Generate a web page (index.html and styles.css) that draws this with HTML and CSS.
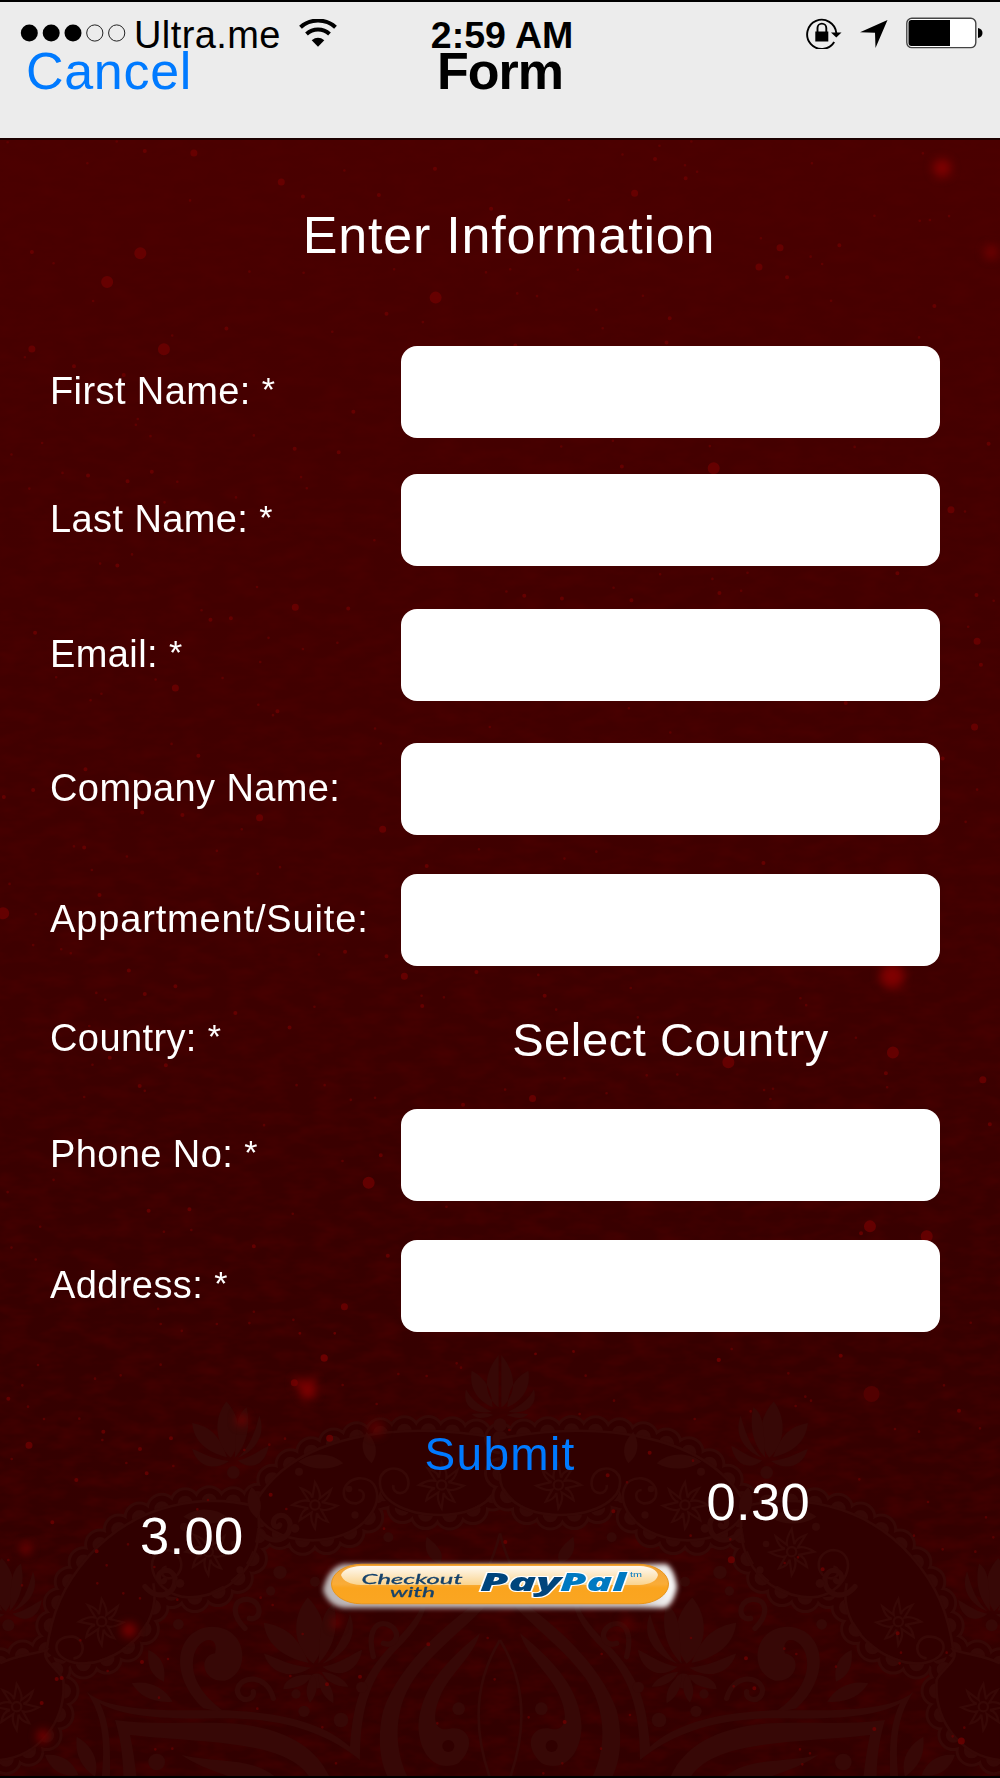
FILE: index.html
```html
<!DOCTYPE html>
<html>
<head>
    <meta charset="utf-8">
    <title>Form</title>
    <link rel="stylesheet" href="styles.css">
</head>
<body>
    <div class="screen">
        <!-- Background: speckles and mandala -->
        <svg class="backdrop" viewBox="0 0 1000 1778" aria-hidden="true">
            <defs>
                <filter id="soft" x="-50%" y="-50%" width="200%" height="200%"><feGaussianBlur stdDeviation="5"/></filter>
                <filter id="grain" x="0" y="0" width="100%" height="100%">
                    <feTurbulence type="fractalNoise" baseFrequency=".035 .08" numOctaves="3" seed="4"/>
                    <feColorMatrix values="0 0 0 0 .08  0 0 0 0 0  0 0 0 0 0  1 0 0 0 -.38"/>
                </filter>
                <g id="lotus">
                    <path d="M-8 -12 C-62 -60 -62 -140 -22 -190 C25 -140 32 -70 -8 -12Z"/>
                    <path d="M4 -12 C48 -60 54 -120 42 -172 C0 -145 12 -70 4 -12Z"/>
                    <path d="M-20 -14 C-45 -85 -75 -112 -130 -122 C-125 -65 -85 -30 -20 -14Z"/>
                    <path d="M14 -12 C70 -35 105 -85 82 -146 C65 -80 45 -40 14 -12Z"/>
                    <path d="M-14 -2 C-70 -8 -100 -30 -130 -40 C-115 15 -60 32 -14 -2Z"/>
                    <path d="M14 -4 C60 -14 85 -38 112 -50 C102 12 52 30 14 -4Z"/>
                    <circle cy="34" r="20"/>
                </g>
                <g id="star" class="ring">
                    <path d="M0 -68 Q18 -38 14 -20 L48 -46 Q38 -12 20 -9 L66 2 Q34 20 18 14 L38 50 Q12 44 6 24 L0 70 Q-16 44 -10 22 L-46 46 Q-40 14 -20 10 L-68 0 Q-38 -18 -18 -12 L-42 -50 Q-12 -40 -8 -22Z"/>
                    <circle r="14"/>
                </g>
                <g id="filler">
                    <path d="M-135 30 C-100 75 -40 55 -45 5 C-52 -28 -95 -25 -95 5 C-92 18 -80 18 -76 10" class="curl" transform="translate(-30 50)"/>
                    <path d="M45 -85 C5 -120 -50 -118 -90 -90 C-50 -65 5 -62 45 -85Z" transform="translate(40 -40)"/>
                    <path d="M0 0 C-35 -30 -32 -65 -15 -95 C15 -65 22 -30 0 0Z" transform="translate(170 -125)"/>
                    <circle cx="-48" cy="-100" r="12"/><circle cx="102" cy="-48" r="10"/><circle cx="-60" cy="70" r="13"/><circle cx="120" cy="30" r="11"/>
                </g>
                <path id="lobe1" d="M1500 430 C1505 500 1430 555 1320 555 C1210 555 1125 505 1142 440 C1160 400 1230 410 1225 465 C1222 500 1175 495 1180 465"/>
                <path id="lobe2" d="M1500 325 C1200 270 870 310 760 530 C800 660 1040 660 1110 555 C1150 500 1130 440 1075 445 C1015 455 1020 525 1070 520 C1100 510 1095 480 1075 480"/>
                <path id="lobe3" d="M770 530 C620 490 410 515 265 680 C190 765 155 850 140 960"/>
                <path id="lobe3b" d="M775 545 C800 740 640 815 545 800 C450 780 425 665 500 660 C560 665 555 745 505 745 C480 740 480 715 500 710"/>
                <path id="lobe4" d="M460 760 C490 900 340 1010 235 1000 C150 990 150 915 220 920 C260 930 255 985 220 985"/>
                <path id="lobe5" d="M0 1000 C50 975 90 975 140 960 C120 990 180 1020 190 1050 C200 1180 110 1280 0 1290"/>
                <g id="half">
                    <!-- scalloped edges -->
                    <g class="scallop-outer"><use href="#lobe2"/><use href="#lobe3"/><use href="#lobe3b"/><use href="#lobe4"/><use href="#lobe5"/><use href="#lobe1"/></g>
                    <g class="scallop-gap"><use href="#lobe2"/><use href="#lobe3"/><use href="#lobe3b"/><use href="#lobe4"/><use href="#lobe5"/><use href="#lobe1"/></g>
                    <g class="scallop-inner"><use href="#lobe2"/><use href="#lobe3"/><use href="#lobe3b"/><use href="#lobe4"/><use href="#lobe5"/><use href="#lobe1"/></g>
                    <g class="lobe-fill">
                        <path d="M1500 325 C1200 270 870 310 760 530 C800 660 1040 660 1110 555 L1142 480 C1150 580 1480 600 1500 430Z"/>
                        <path d="M770 530 C620 490 410 515 265 680 C190 765 155 850 140 960 C160 1010 400 1050 475 790 C560 830 800 780 770 530Z"/>
                        <path d="M0 1000 L140 960 C120 990 180 1020 190 1050 C200 1180 110 1280 0 1290Z"/>
                    </g>
                    <g class="lobe-line"><use href="#lobe2"/><use href="#lobe3"/><use href="#lobe3b"/><use href="#lobe4"/><use href="#lobe5"/><use href="#lobe1"/></g>
                    <g class="petal">
                        <use href="#star" x="1325" y="465"/><use href="#star" x="945" y="525"/><use href="#star" x="625" y="665"/>
                        <use href="#star" x="305" y="875"/><use href="#star" x="50" y="1130"/>
                        <use href="#filler" x="945" y="525"/><use href="#filler" x="600" y="690"/>
                        <use href="#lotus" transform="translate(700 395) scale(.95)"/>
                        <use href="#lotus" transform="translate(25 855) scale(.9)"/>
                        <use href="#lotus" transform="translate(950 1015) scale(1.22 1.12)"/>
                        <path d="M935 1035 C880 1030 850 1055 850 1078 C900 1075 925 1060 935 1035Z M940 1035 C910 1070 920 1100 930 1118 C955 1090 955 1060 940 1035Z M955 1030 C1000 1065 1002 1095 1000 1120 C965 1100 955 1070 955 1030Z M965 1025 C1010 1030 1035 1050 1045 1070 C1010 1072 980 1055 965 1025Z"/>
                        <path d="M445 960 C440 1010 455 1040 492 1055 C500 1005 480 975 445 960Z M395 1060 C450 1050 495 1075 518 1115 C460 1120 420 1100 395 1060Z"/>
                        <path d="M230 1220 C225 1270 240 1310 285 1340 C300 1290 275 1245 230 1220Z M135 1275 C185 1270 220 1295 235 1335 C190 1345 150 1320 135 1275Z"/>
                        <path d="M1280 620 C1320 650 1335 675 1320 700 C1285 690 1270 660 1280 620Z"/>
                        <!-- big curl under the lobes -->
                        <path d="M610 1135 C500 1030 530 895 635 890 C745 890 755 1030 675 1052 C610 1060 590 980 645 970 C660 910 590 920 580 985 C570 1050 620 1110 680 1150Z"/>
                        <path d="M260 1085 C310 1130 420 1145 650 1140 C850 1145 970 1180 1050 1250 C1060 1120 1080 1050 1160 960 C1230 890 1260 850 1265 820 L1280 820 C1270 870 1240 910 1180 970 C1100 1060 1080 1160 1080 1290 C980 1210 850 1160 640 1165 C450 1170 350 1150 300 1120 C335 1190 330 1270 330 1344 L305 1344 C315 1240 310 1160 260 1085Z"/>
                        <path d="M345 1170 C450 1185 560 1175 690 1180 C850 1190 950 1250 990 1344 L930 1344 C860 1230 620 1240 390 1215 C400 1260 405 1300 410 1344 L370 1344 C370 1280 360 1220 345 1170Z"/>
                        <path d="M545 1275 C650 1300 760 1280 830 1344 L700 1344 C630 1320 580 1300 545 1275Z"/>
                        <path d="M1440 810 C1340 880 1200 1000 1150 1140 C1130 1220 1140 1300 1165 1344 L1225 1344 C1180 1260 1180 1140 1240 1050 C1310 950 1420 880 1490 790Z"/>
                        <path d="M1440 910 C1330 1000 1260 1080 1255 1190 C1260 1290 1320 1325 1375 1300 C1430 1250 1410 1190 1355 1195 C1300 1210 1295 1160 1320 1100 C1350 1030 1420 980 1440 910Z"/>
                        <circle cx="840" cy="727" r="20"/><circle cx="535" cy="883" r="16"/><circle cx="812" cy="783" r="14"/><circle cx="912" cy="1144" r="17"/><circle cx="1023" cy="1170" r="22"/><circle cx="470" cy="1296" r="25"/><circle cx="1376" cy="1136" r="19"/><circle cx="1085" cy="1072" r="17"/><circle cx="888" cy="1092" r="14"/><circle cx="1165" cy="622" r="15"/><circle cx="945" cy="755" r="15"/>
                    </g>
                    <circle class="hole" cx="1345" cy="1248" r="18"/>
                    <path class="curl" d="M735 895 C690 850 700 805 745 808 C790 815 785 875 748 865 M820 1105 C800 1030 720 1035 712 1080 C715 1120 765 1115 760 1085 M1120 980 C1100 900 1130 875 1160 882 C1210 900 1190 955 1150 940"/>
                    <path class="outline" d="M1500 610 C1480 690 1450 760 1380 820 M1500 930 C1420 1060 1420 1200 1470 1344"/>
                    <path class="petal" d="M1490 228 C1450 190 1450 130 1496 75 V232Z M1478 232 C1475 170 1450 140 1415 122 C1405 180 1440 215 1478 232Z M1475 245 C1430 225 1410 200 1398 178 C1385 230 1425 255 1475 245Z M1480 255 C1455 265 1430 270 1415 252 C1440 250 1460 248 1480 255Z"/>
                </g>
            </defs>

            <rect y="138" width="1000" height="1640" filter="url(#grain)"/>

            <g transform="translate(0 1330) scale(.33333)">
                <use href="#half"/>
                <use href="#half" transform="translate(3000) scale(-1 1)"/>
                <circle class="petal" cx="1500" cy="285" r="20"/>
            </g>

            <g class="specks" transform="translate(0 130) scale(.6378 .3827)">
                <path class="s12" d="M168 397h0M220 322h0M683 438h0M257 573h0M1119 884h0"/>
                <path class="s8" d="M304 60h0M441 136h0M50 572h0M1223 308h0M1190 358h0M463 1247h0M275 1458h0M1491 992h0M1528 1560h0M995 165h0M1532 1336h0"/>
                <path class="s5" d="M227 55h0M475 174h0M594 170h0M770 206h0M1027 76h0M1075 126h0M50 319h0M116 617h0M194 640h0M606 480h0M1050 492h0M1465 460h0M1316 301h0M1234 385h0M200 918h0M238 893h0M138 903h0M462 833h0M531 842h0M554 736h0M975 879h0M822 1217h0M881 1224h0M990 1229h0M1128 1210h0M1407 1158h0M1531 1215h0M330 1280h0M362 1276h0M546 1250h0M55 1314h0M435 1519h0M1550 820h0M1326 1497h0M184 1138h0M355 519h0M1045 555h0M1538 1397h0M808 563h0M682 101h0"/>
                <path class="s3" d="M12 32h0M183 30h0M540 106h0M976 64h0M1034 41h0M1084 30h0M1074 92h0M1093 109h0M1273 87h0M1447 61h0M892 183h0M298 184h0M137 87h0M1371 224h0M1442 237h0M1458 235h0M1488 225h0M1193 283h0M1271 331h0M1289 350h0M906 365h0M800 364h0M762 372h0M618 364h0M476 373h0M391 370h0M84 348h0M146 447h0M811 427h0M842 434h0M1008 433h0M935 470h0M945 518h0M663 502h0M521 527h0M270 537h0M39 594h0M216 755h0M213 770h0M236 800h0M398 798h0M66 818h0M18 848h0M98 896h0M278 919h0M46 937h0M370 960h0M472 907h0M481 936h0M258 973h0M880 827h0M961 812h0M1113 826h0M1340 828h0M1513 997h0M587 1072h0M207 1109h0M157 1133h0M403 1194h0M316 1255h0M421 1327h0M475 1356h0M529 1340h0M408 1390h0M349 1432h0M244 1436h0M88 1430h0M159 1473h0M142 1490h0M405 1502h0M428 1529h0M588 1564h0M768 1560h0M986 1511h0M1035 1161h0M1172 1157h0M1117 1173h0M962 1196h0M1162 1204h0M794 1206h0M1518 1298h0M1558 1230h0M1303 446h0M1441 542h0"/>
            </g>
            <g class="specks" transform="translate(0 730) scale(.6378 .4082)">
                <path class="s12" d="M1142 814h0M5 449h0M1400 790h0M1364 1216h0M1453 1240h0M578 1109h0"/>
                <path class="s8" d="M407 215h0M600 243h0M634 603h0M540 1413h0M508 1538h0M1541 857h0M835 903h0"/>
                <path class="s5" d="M6 164h0M52 147h0M223 202h0M286 208h0M132 288h0M156 404h0M275 628h0M369 693h0M227 647h0M202 589h0M311 63h0M134 96h0M669 333h0M1197 326h0M747 593h0M854 651h0M1389 841h0M726 918h0M454 729h0M219 872h0M597 1042h0M233 1178h0M297 1174h0M398 1265h0M608 1288h0M1350 1233h0M606 554h0M260 821h0M172 803h0M1478 70h0M1552 966h0M1127 1543h0M662 676h0M541 543h0"/>
                <path class="s3" d="M269 34h0M597 33h0M1051 6h0M1532 146h0M1514 225h0M379 243h0M116 285h0M199 310h0M144 343h0M340 296h0M404 352h0M439 336h0M751 292h0M885 315h0M935 298h0M15 377h0M56 451h0M52 527h0M96 537h0M111 547h0M500 550h0M545 497h0M844 600h0M989 632h0M872 685h0M696 655h0M661 651h0M493 678h0M151 644h0M165 661h0M1000 704h0M1255 657h0M1264 674h0M1342 754h0M885 853h0M1014 846h0M1062 844h0M1212 879h0M1198 882h0M1208 904h0M1391 875h0M951 890h0M792 881h0M465 870h0M509 870h0M550 906h0M588 901h0M414 968h0M132 899h0M227 884h0M145 820h0M140 725h0M84 1102h0M12 1132h0M63 1217h0M257 1229h0M300 1225h0M459 1185h0M18 1268h0M56 1297h0M537 1056h0M700 1168h0M248 1418h0M252 1455h0M285 1472h0M340 1455h0M391 1453h0M398 1425h0M460 1445h0M470 1478h0M525 1478h0M840 1528h0M899 1522h0M1319 1533h0M1522 1452h0"/>
            </g>
            <g class="specks" transform="translate(0 1330) scale(.33333)">
                <path class="s8" d="M87 346h0M973 85h0M883 158h0M989 325h0M2194 689h0M2884 1233h0"/>
                <path class="s5" d="M229 450h0M1285 943h0M2877 242h0M2156 90h0M1949 368h0M1516 636h0M2238 985h0M185 1044h0M170 1047h0M25 206h0M310 305h0M420 357h0M513 325h0M157 577h0M290 664h0M440 430h0M812 494h0M426 996h0M125 1119h0M981 1063h0M1080 1040h0M1823 436h0M1840 544h0M2522 77h0M2468 718h0M2693 910h0M2623 1197h0M2263 1075h0M1694 1176h0"/>
                <path class="s3" d="M379 399h0M733 360h0M859 537h0M592 538h0M1152 596h0M370 790h0M420 805h0M1130 222h0M1528 300h0M1757 137h0M1586 1162h0M2430 1270h0M808 344h0M1630 1330h0M2072 617h0M114 105h0M67 166h0M285 146h0M362 136h0M482 104h0M900 10h0M1004 10h0M84 230h0M132 267h0M238 266h0M307 330h0M35 387h0M520 408h0M855 326h0M624 510h0M384 643h0M320 706h0M463 711h0M25 690h0M66 766h0M292 760h0M532 809h0M782 803h0M818 825h0M908 912h0M241 931h0M504 987h0M323 1023h0M477 1103h0M871 1038h0M772 1136h0M967 1192h0M466 1258h0M517 1256h0M1008 1300h0M1195 132h0M1280 138h0M1383 113h0M1370 100h0M1028 165h0M1463 924h0M1484 1048h0M1312 1180h0M1606 72h0M1721 65h0M2195 57h0M2365 130h0M2416 200h0M2433 212h0M2387 228h0M2252 244h0M2084 267h0M2832 166h0M2685 297h0M2757 305h0M2940 295h0M2578 448h0M2784 516h0M2958 562h0M2742 617h0M2828 658h0M2926 665h0M2980 622h0M1842 212h0M1739 252h0M2079 392h0M1881 457h0M2191 628h0M2354 699h0M2394 682h0M1805 972h0M2073 924h0M2353 956h0M2389 972h0M2703 968h0M2840 968h0M2699 1000h0M2508 1010h0M2201 1069h0M1890 1155h0M1803 1256h0M2400 1258h0M2407 1303h0M2858 1219h0M2893 1193h0M1687 1300h0"/>
            </g>
            <circle class="disc" cx="871.5" cy="1394" r="8"/>
            <g class="glow">
                <circle cx="942" cy="168" r="9"/><circle cx="991" cy="252" r="7" opacity=".7"/><circle cx="892" cy="976" r="12"/>
                <circle cx="308" cy="1391" r="8"/><circle cx="299" cy="1383" r="5"/><circle cx="312" cy="1381" r="4"/>
                <circle cx="376" cy="1428" r="8" opacity=".5"/><circle cx="242" cy="1420" r="5"/>
                <circle cx="129" cy="1630" r="7"/><circle cx="26" cy="1549" r="5"/><circle cx="43" cy="1736" r="6"/><circle cx="336" cy="1623" r="4"/>
                <circle cx="627" cy="1623" r="6" opacity=".5"/>
            </g>
        </svg>

        <header class="top">
            <div class="status-bar">
                <div class="status-left">
                    <svg class="signal" width="106" height="18" viewBox="0 0 106 18">
                        <circle cx="9.3" cy="9" r="8.5"/><circle cx="31.2" cy="9" r="8.5"/><circle cx="53" cy="9" r="8.5"/>
                        <circle class="empty" cx="74.8" cy="9" r="8.1"/><circle class="empty" cx="96.7" cy="9" r="8.1"/>
                    </svg>
                    <span class="carrier">Ultra.me</span>
                    <svg class="wifi" width="38" height="28" viewBox="0 0 38 28">
                        <path d="M1.5 8.3 C11 -.7 27 -.7 36.5 8.3" stroke-width="4"/>
                        <path d="M7.5 15 C14 9 24 9 30.5 15" stroke-width="4"/>
                        <path d="M12.7 21.3 Q19 16.4 25.3 21.3 L19 27.8Z" fill="#000" stroke="none"/>
                    </svg>
                </div>
                <span class="time">2:59 AM</span>
                <div class="status-right">
                    <svg width="36" height="32" viewBox="0 0 36 32">
                        <path d="M28.2 25 A14.6 14.6 0 1 1 30.3 16" fill="none" stroke="#000" stroke-width="1.9"/>
                        <path d="M25 15.4h10.5l-5.2 5z"/>
                        <rect x="9.3" y="14.5" width="13" height="10"/>
                        <path d="M11.500 15v-4a4.400 4.400 0 0 1 8.800 0v4" fill="none" stroke="#000" stroke-width="1.9"/>
                    </svg>
                    <svg class="location" width="28" height="28" viewBox="0 0 28 28"><path d="M27.5 0 L15.5 28 L15 12.7 L0 12.3Z"/></svg>
                    <svg width="78" height="32" viewBox="0 0 78 32">
                        <rect x=".8" y="1.2" width="69" height="29.4" rx="5" fill="#fff" stroke="#444" stroke-width="1.4"/>
                        <path d="M5.5 3h38.5v26H5.5q-3 0-3-3V6q0-3 3-3z"/>
                        <path d="M72 11q4.5 1.2 4.5 5t-4.5 5z"/>
                    </svg>
                </div>
            </div>
            <div class="nav-bar">
                <a class="cancel">Cancel</a>
                <h1>Form</h1>
            </div>
        </header>

        <h2>Enter Information</h2>

        <form>
            <div class="row"><label for="first">First Name: <span class="req">*</span></label><input type="text" id="first"></div>
            <div class="row"><label for="last">Last Name: <span class="req">*</span></label><input type="text" id="last"></div>
            <div class="row"><label for="email">Email: <span class="req">*</span></label><input type="text" id="email"></div>
            <div class="row"><label for="company">Company Name:</label><input type="text" id="company"></div>
            <div class="row"><label for="suite">Appartment/Suite:</label><input type="text" id="suite"></div>
            <div class="row"><label>Country: <span class="req">*</span></label><span class="select-country">Select Country</span></div>
            <div class="row"><label for="phone">Phone No: <span class="req">*</span></label><input type="text" id="phone"></div>
            <div class="row"><label for="address">Address: <span class="req">*</span></label><input type="text" id="address"></div>
            <button type="button" class="submit">Submit</button>
        </form>

        <div class="amounts">
            <span class="amount-left">3.00</span>
            <span>0.30</span>
        </div>

        <svg class="paypal" width="380" height="65" viewBox="310 1550 380 65">
            <defs>
                <filter id="halo" x="-10%" y="-30%" width="120%" height="160%"><feGaussianBlur stdDeviation="2.5"/></filter>
                <linearGradient id="orange" x1="0" y1="0" x2="0" y2="1">
                    <stop offset="0" stop-color="#f0a33a"/><stop offset=".5" stop-color="#f9ac38"/><stop offset=".6" stop-color="#faa41e"/><stop offset="1" stop-color="#faa622"/>
                </linearGradient>
                <linearGradient id="shine" x1="0" y1="0" x2="0" y2="1">
                    <stop offset="0" stop-color="#fffaf2"/><stop offset="1" stop-color="#fad48f"/>
                </linearGradient>
                <linearGradient id="haloFill"><stop offset="0" stop-color="#bdb6b6"/><stop offset=".9" stop-color="#cfcaca"/><stop offset="1" stop-color="#fff"/></linearGradient>
            </defs>
            <path d="M344 1562H666Q674 1566 677 1585Q673 1604 664 1606H344Q328 1604 323 1588Q328 1565 344 1562Z" fill="url(#haloFill)" filter="url(#halo)"/>
            <rect x="331.5" y="1562.3" width="337" height="39.5" rx="30" ry="19.7" fill="url(#orange)" stroke="#e8951c" stroke-width="1"/>
            <path d="M361 1564H640Q656 1565 658 1573Q656 1582 639 1583H361Q344 1582 341 1573Q344 1565 361 1564Z" fill="url(#shine)"/>
            <g class="paypal-small">
                <text x="361.5" y="1581.5" textLength="101" lengthAdjust="spacingAndGlyphs">Checkout</text>
                <text x="390" y="1595" textLength="45" lengthAdjust="spacingAndGlyphs">with</text>
            </g>
            <g class="paypal-logo">
                <text x="480" y="1589" textLength="81" lengthAdjust="spacingAndGlyphs" fill="#00457c">Pay</text>
                <text x="560" y="1589" textLength="66" lengthAdjust="spacingAndGlyphs" fill="#0079c1">Pal</text>
            </g>
            <text class="tm" x="630" y="1575" textLength="12" lengthAdjust="spacingAndGlyphs">tm</text>
        </svg>
    </div>
</body>
</html>
```

FILE: styles.css
```css
* {
    box-sizing: border-box;
}
body {
    margin: 0;
    font-family: "Liberation Sans", Arial, sans-serif;
    color: #fff;
}
.screen {
    position: relative;
    width: 1000px;
    height: 1778px;
    overflow: hidden;
    background: linear-gradient(#4a0000 140px, #430000 500px, #3f0000 900px, #360000 1350px, #310000);
    border-bottom: 2px solid #000;
}
.backdrop {
    position: absolute;
    top: 0;
    left: 0;
    width: 1000px;
    height: 1778px;
}
.top, h2, form, .amounts, .paypal {
    position: relative;
}

/* background drawing */
.petal {
    fill: #370806;
}
.ring {
    fill: none;
    stroke: #370806;
    stroke-width: 7;
}
.lobe-line, .outline {
    fill: none;
    stroke: #370806;
    stroke-width: 8;
}
.curl {
    fill: none;
    stroke: #370806;
    stroke-width: 16;
    stroke-linecap: round;
}
.scallop-outer, .scallop-gap, .scallop-inner {
    fill: none;
    stroke-linecap: round;
    stroke-dasharray: 0 72;
}
.scallop-outer {
    stroke: #370806;
    stroke-width: 96;
}
.scallop-gap {
    stroke: #310000;
    stroke-width: 78;
}
.scallop-inner {
    stroke: #370806;
    stroke-width: 46;
}
.lobe-fill, .hole {
    fill: #300000;
}
.specks path {
    fill: none;
    stroke: #6e0000;
    stroke-linecap: round;
    vector-effect: non-scaling-stroke;
}
.specks .s12 {
    stroke-width: 12px;
    opacity: .8;
}
.specks .s8 {
    stroke-width: 7px;
    opacity: .8;
}
.specks .s5 {
    stroke-width: 4px;
    opacity: .8;
}
.specks .s3 {
    stroke-width: 2.6px;
    opacity: .65;
}
.disc {
    fill: #520000;
}
.glow {
    fill: #800000;
    filter: url(#soft);
}

/* header */
.top {
    height: 140px;
    background: #ececec;
    color: #000;
    border-top: 2px solid #000;
    border-bottom: 2px solid #1c0000;
}
.status-bar {
    display: grid;
    grid-template-columns: 1fr auto 1fr;
    align-items: center;
    height: 50px;
    padding: 11px 16px 0 20px;
    font-size: 38px;
    line-height: 30px;
}
.status-left, .status-right {
    display: flex;
    align-items: center;
}
.status-right {
    justify-content: flex-end;
    gap: 18px;
}
.signal .empty {
    fill: none;
    stroke: #222;
    stroke-width: 1;
}
.carrier {
    margin: 0 18px 0 8px;
    padding-top: 4px;
    letter-spacing: .4px;
}
.wifi {
    fill: none;
    stroke: #000;
}
.location {
    margin-top: 2px;
}
.time {
    padding-top: 4px;
    font-weight: bold;
    font-size: 37.5px;
}
.nav-bar {
    display: grid;
    grid-template-columns: 1fr auto 1fr;
    padding: 0 26px;
    font-size: 52px;
    line-height: 38px;
}
.cancel {
    color: #007aff;
    letter-spacing: .7px;
}
h1 {
    margin: 0;
    font-size: 52px;
    line-height: 38px;
    letter-spacing: -1px;
}

/* form */
h2 {
    margin: 66px 0 0 18px;
    font-size: 52px;
    font-weight: normal;
    line-height: 58px;
    text-align: center;
    letter-spacing: .8px;
}
form {
    display: flex;
    flex-direction: column;
    margin-top: 82px;
    padding: 0 60px 0 50px;
}
.row {
    display: grid;
    grid-template-columns: 351px 1fr;
    align-items: center;
    height: 92px;
    margin-bottom: 39px;
}
.row:nth-child(1) {
    margin-bottom: 36px;
}
.row:nth-child(2) {
    margin-bottom: 42.5px;
}
.row:nth-child(3) {
    margin-bottom: 42.5px;
}
.row:nth-child(5) {
    margin-bottom: 27px;
}
.row:nth-child(6) {
    margin-bottom: 24px;
}
label {
    padding-bottom: 1px;
    font-size: 38px;
    letter-spacing: .4px;
    white-space: nowrap;
}
label[for="suite"] {
    letter-spacing: .85px;
}
.req {
    font-size: 34px;
    line-height: 20px;
    vertical-align: 3px;
}
input {
    width: 100%;
    height: 92px;
    border: none;
    border-radius: 16px;
    background: #fff;
}
.select-country {
    font-size: 47px;
    text-align: center;
    letter-spacing: .6px;
}
.submit {
    align-self: center;
    margin: 61px 0 0 10px;
    padding: 0;
    border: none;
    background: none;
    color: #007aff;
    font-family: inherit;
    font-size: 46px;
    line-height: 44px;
    letter-spacing: 1.3px;
}
.amounts {
    display: flex;
    justify-content: space-between;
    height: 76px;
    padding: 0 190px 0 140px;
    font-size: 52.5px;
    line-height: 51px;
    letter-spacing: .3px;
}
.amount-left {
    padding-top: 34px;
}

/* paypal button */
.paypal {
    display: block;
    margin-left: 310px;
}
.paypal-small {
    font-family: Lato, sans-serif;
    font-style: italic;
    font-size: 14px;
    fill: #15426b;
    stroke: #15426b;
    stroke-width: .3;
}
.paypal-logo {
    font-family: "Open Sans", sans-serif;
    font-weight: 800;
    font-style: italic;
    font-size: 25px;
    stroke: #fff;
    stroke-width: 2;
    paint-order: stroke;
}
.tm {
    font-size: 7px;
    fill: #0079c1;
}
```
